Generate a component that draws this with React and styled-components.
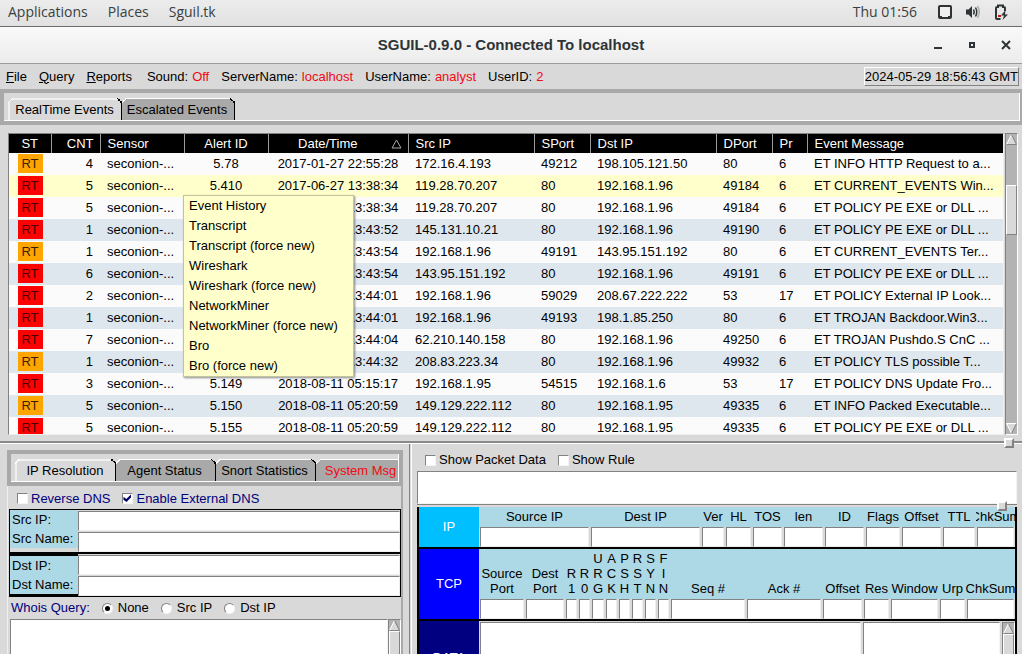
import React from "react";
import styled, { createGlobalStyle, css } from "styled-components";

const GREY = "#d9d9d9";
const BAND = "#a9a9a9";
const SHADE = "#828282";
const LIGHT = "#ffffff";
const NAVY = "#00007c";
const RED = "#f00a14";

const Global = createGlobalStyle`
  *, *::before, *::after { box-sizing: border-box; }
  html, body { margin: 0; height: 100%; overflow: hidden; }
  #root { height: 100%; }
  body {
    background: ${GREY};
    color: #000;
    font-family: "Liberation Sans", Arial, sans-serif;
    font-size: 13px;
    line-height: 16px;
  }
  button, input, textarea { font: inherit; color: inherit; margin: 0; border-radius: 0; }
  button { border: 0; padding: 0; background: none; white-space: nowrap; }
`;

const Screen = styled.div`
  display: flex;
  flex-direction: column;
  height: 100vh;
  overflow: hidden;
`;

/* desktop panel */

const DesktopBar = styled.header`
  flex: none;
  display: flex;
  align-items: center;
  justify-content: space-between;
  height: 27px;
  padding: 0 13px 2px 8px;
  border-bottom: 1px solid #6c6c6c;
  background: linear-gradient(#ececec, #e1e1e1);
  color: #3a3f41;
  font-family: "Open Sans", "Noto Sans", sans-serif;
  font-size: 14px;
`;

const DesktopGroup = styled.div`
  display: flex;
  align-items: center;
  gap: ${(p) => p.$gap}px;
`;

const DesktopButton = styled.button`
  line-height: 20px;
`;

const Tray = styled.svg`
  display: block;
  width: 16px;
  height: 16px;
`;

/* window title */

const TitleBar = styled.div`
  flex: none;
  display: grid;
  grid-template-columns: 1fr auto 1fr;
  align-items: center;
  height: 37px;
  padding: 0 10px;
  border-bottom: 1px solid #9b9b9b;
  background: linear-gradient(#f9f9f9, #ececec);
`;

const Title = styled.h1`
  grid-column: 2;
  margin: 0;
  font-size: 15px;
  line-height: 20px;
  font-weight: bold;
  color: #2e3436;
`;

const WindowButtons = styled.div`
  display: flex;
  justify-content: flex-end;
  gap: 22px;
`;

const WindowButton = styled.button`
  width: 12px;
  height: 12px;
  svg { display: block; }
`;

/* menu bar */

const MenuBar = styled.nav`
  flex: none;
  display: flex;
  align-items: center;
  height: 25px;
  padding: 0 3px 0 6px;
`;

const Menus = styled.div`
  display: flex;
  gap: 12px;
`;

const MenuButton = styled.button`
  &::first-letter { text-decoration: underline; }
`;

const Statuses = styled.div`
  display: flex;
  flex: 1;
  gap: 12px;
  margin-left: 15px;
`;

const Status = styled.span`
  display: flex;
  gap: 4px;
  white-space: nowrap;
`;

const StatusValue = styled.span`
  color: ${RED};
`;

const Clock = styled.div`
  padding: 0;
  border: 1px solid;
  border-color: ${LIGHT} ${SHADE} ${SHADE} ${LIGHT};
  line-height: 17px;
  white-space: nowrap;
`;

/* notebook tabs */

const TabBand = styled.div`
  flex: none;
  padding: 4px 2px 4px 4px;
  background: ${BAND};
`;

const TabStrip = styled.div`
  display: flex;
  align-items: flex-end;
  height: 28px;
  padding-left: 4px;
  border: solid ${LIGHT};
  border-width: 0 1px 1px 0;
  background: ${GREY};
  overflow: hidden;
`;

const Tab = styled.button`
  position: relative;
  flex: none;
  width: ${(p) => p.$width}px;
  height: 22px;
  padding-right: 2px;
  border: solid;
  border-width: 2px 1px 0 2px;
  border-color: #f0f0f0 #000 transparent #f0f0f0;
  background: ${(p) => (p.$active ? GREY : BAND)};
  color: ${(p) => (p.$alert ? RED : "#000")};

  &::before,
  &::after {
    content: "";
    position: absolute;
    top: -2px;
    width: 5px;
    height: 5px;
  }
  &::before {
    left: -2px;
    background: linear-gradient(to top left, transparent 45%, #fff 45% 60%, ${GREY} 60%);
  }
  &::after {
    right: -1px;
    background: linear-gradient(to top right, transparent 40%, #000 40% 60%, ${GREY} 60%);
  }

  ${(p) =>
    !p.$active &&
    css`
      border-width: 1px 1px 0 0;
      border-top-color: ${LIGHT};
      &::before { left: 0; top: -1px; }
      &::after { top: -1px; }
    `}
`;

/* scroll bars */

const Trough = styled.div`
  flex: none;
  display: flex;
  flex-direction: column;
  width: 13px;
  border: 1px solid;
  border-color: ${SHADE} ${LIGHT} ${LIGHT} ${SHADE};
  background: #b3b3b3;
`;

const Arrow = styled.svg`
  flex: none;
  display: block;
  width: 11px;
  height: 11px;
`;

const Lane = styled.div`
  flex: 1;
  display: flex;
  flex-direction: column;
  padding-top: ${(p) => p.$before}px;
`;

const Thumb = styled.div`
  height: ${(p) => (p.$size ? `${p.$size}px` : "100%")};
  border: 1px solid;
  border-color: ${LIGHT} ${SHADE} ${SHADE} ${LIGHT};
  background: ${GREY};
`;

function ScrollBar({ before = 0, size }) {
  return (
    <Trough aria-hidden="true">
      <Arrow viewBox="0 0 11 11">
        <path d="M5.5 0.5 L10.5 10.5 H0.5 Z" fill={GREY} />
        <path d="M5.5 0.5 L0.5 10.5" stroke="#fff" />
        <path d="M5.5 0.5 L10.5 10.5 H0.5" stroke={SHADE} fill="none" />
      </Arrow>
      <Lane $before={before}>
        <Thumb $size={size} />
      </Lane>
      <Arrow viewBox="0 0 11 11">
        <path d="M0.5 0.5 H10.5 L5.5 10.5 Z" fill={GREY} />
        <path d="M5.5 10.5 L0.5 0.5 H10.5" stroke="#fff" fill="none" />
        <path d="M10.5 0.5 L5.5 10.5" stroke={SHADE} />
      </Arrow>
    </Trough>
  );
}

/* events */

const EventsPane = styled.main`
  position: relative;
  flex: none;
  display: flex;
  gap: 1px;
  height: 316px;
  padding: 8px 4px 6px 8px;
`;

const EventsFrame = styled.div`
  flex: 1;
  min-width: 0;
  overflow: hidden;
  border: 1px solid;
  border-color: ${SHADE} #eee #eee ${SHADE};
`;

const Table = styled.table`
  width: 100%;
  table-layout: fixed;
  border-collapse: collapse;
`;

const HeadCell = styled.th`
  height: 19px;
  padding: 0 6px 0 ${(p) => (p.$align ? 6 : 7)}px;
  border-left: ${(p) => (p.$first ? 0 : 1)}px solid #999;
  background: #000;
  color: #fff;
  font-weight: normal;
  line-height: 19px;
  text-align: ${(p) => p.$align || "left"};
  white-space: nowrap;
`;

const SortHead = styled.div`
  display: flex;
  align-items: center;
  justify-content: flex-end;
  gap: 33px;
`;

const Row = styled.tr`
  background: ${(p) => p.$bg};
`;

const Cell = styled.td`
  height: 22px;
  padding: 0 0 0 7px;
  line-height: 22px;
  white-space: nowrap;
  overflow: hidden;
  text-align: ${(p) => p.$align || "left"};
  ${(p) => p.$align === "center" && "padding: 0;"}
  ${(p) => p.$align === "right" && "padding: 0 7px 0 0;"}
`;

const Badge = styled.span`
  display: block;
  width: 25px;
  margin: 0 auto 1px;
  background: ${(p) => (p.$high ? "#fd0202" : "#ffa500")};
  color: ${(p) => (p.$high ? "#4a0000" : "#3a1e00")};
  line-height: 19px;
`;

const ContextMenu = styled.div`
  position: absolute;
  left: 183px;
  top: 70px;
  display: flex;
  flex-direction: column;
  width: 171px;
  border: 1px solid #c4c49c;
  background: #ffffcc;
  box-shadow: 1px 1px 2px rgba(0, 0, 0, 0.45);
`;

const ContextItem = styled.button`
  padding-left: 5px;
  line-height: 20px;
  text-align: left;
`;

const Sash = styled.div`
  position: relative;
  flex: none;
  height: 3px;
  border-top: 2px solid #8a8a8a;
  border-bottom: 1px solid ${LIGHT};
`;

const Handle = styled.div`
  position: absolute;
  right: ${(p) => p.$right}px;
  top: ${(p) => p.$top}px;
  width: 10px;
  height: 10px;
  border: 2px solid;
  border-color: ${LIGHT} ${SHADE} ${SHADE} ${LIGHT};
  background: ${GREY};
`;

/* lower panes */

const Lower = styled.div`
  flex: 1;
  display: flex;
  min-height: 0;
`;

const LeftPane = styled.section`
  flex: none;
  display: flex;
  flex-direction: column;
  width: 396px;
  margin: 6px 6px 0 7px;
  border-right: 2px solid ${BAND};
`;

const PaneDivider = styled.div`
  flex: none;
  width: 3px;
  border-left: 1px solid ${SHADE};
  border-right: 1px solid ${LIGHT};
`;

const LeftBody = styled.div`
  flex: 1;
  display: flex;
  flex-direction: column;
  min-height: 0;
  padding-left: 1px;
  border-left: 1px solid #eee;
`;

const Options = styled.div`
  flex: none;
  display: flex;
  align-items: center;
  gap: 12px;
  height: ${(p) => p.$height}px;
  padding-top: ${(p) => p.$drop || 0}px;
  padding-left: ${(p) => p.$inset || 0}px;
  color: ${(p) => (p.$navy ? NAVY : "#000")};
`;

const Option = styled.label`
  display: flex;
  align-items: center;
  gap: ${(p) => p.$gap || 3}px;
  white-space: nowrap;
`;

const CheckBox = styled.input.attrs({ type: "checkbox" })`
  appearance: none;
  width: 11px;
  height: 11px;
  border: 1px solid;
  border-color: ${SHADE} #f4f4f4 #f4f4f4 ${SHADE};
  background: #fff;
  &:checked::after {
    content: "";
    display: block;
    width: 8px;
    height: 8px;
    background: #000060;
    clip-path: polygon(0 35%, 35% 62%, 100% 0, 100% 38%, 38% 100%, 0 72%);
  }
`;

const Radio = styled.input.attrs({ type: "radio" })`
  appearance: none;
  display: grid;
  place-items: center;
  width: 11px;
  height: 11px;
  border: 1px solid;
  border-color: ${SHADE} #f4f4f4 #f4f4f4 ${SHADE};
  border-radius: 50%;
  background: #fff;
  &:checked::after {
    content: "";
    width: 5px;
    height: 5px;
    border-radius: 50%;
    background: #000;
  }
`;

const Hosts = styled.div`
  flex: none;
  border: solid #000;
  border-width: 1px 1px 0;
`;

const Host = styled.div`
  display: grid;
  grid-template-columns: 68px 1fr;
  border-bottom: ${(p) => (p.$last ? 1 : 2)}px solid #000;
`;

const HostLabels = styled.div`
  display: flex;
  flex-direction: column;
  border: solid #000;
  border-width: ${(p) => (p.$last ? "2px 0" : "0")};
`;

const HostLabel = styled.label`
  padding-left: 2px;
  background: #add8e6;
  line-height: 19px;
`;

const HostFields = styled.div`
  display: flex;
  flex-direction: column;
  gap: 1px;
  padding-top: 1px;
`;

const Field = styled.input.attrs({ type: "text" })`
  display: block;
  width: 100%;
  min-width: 0;
  height: 20px;
  padding: 0 1px;
  border: 1px solid;
  border-color: ${SHADE} #eee #eee ${SHADE};
  background: #fff;
`;

const WhoisTitle = styled.span`
  color: ${NAVY};
`;

const TextRow = styled.div`
  flex: none;
  display: flex;
  height: 120px;
  padding-left: 1px;
`;

const TextBox = styled.textarea`
  display: block;
  flex: ${(p) => p.$flex || 1};
  width: 0;
  min-width: 0;
  height: auto;
  padding: 2px;
  border: 1px solid;
  border-color: ${SHADE} #f4f4f4 #f4f4f4 ${SHADE};
  background: #fff;
  resize: none;
  overflow: hidden;
`;

const RightPane = styled.section`
  flex: 1;
  display: flex;
  flex-direction: column;
  min-width: 0;
  padding: 0 5px;
`;

const RuleBox = styled.div`
  position: relative;
  flex: none;
  display: flex;
  height: 34px;
  margin-bottom: 2px;
  border-bottom: 1px solid ${SHADE};
`;

const Packet = styled.div`
  flex: 1;
  display: flex;
  flex-direction: column;
  gap: 2px;
  min-height: 0;
  padding: 0 2px;
  background: #000;
  overflow: hidden;
`;

const Layer = styled.div`
  flex: none;
  display: grid;
  grid-template-columns: 60px 1fr;
  height: ${(p) => p.$height}px;
`;

const LayerName = styled.div`
  display: grid;
  place-items: center;
  background: ${(p) => p.$bg};
  color: #fff;
`;

const HeaderFields = styled.div`
  display: grid;
  grid-template-columns: ${(p) => p.$columns};
  min-width: 0;
  background: #add8e6;
`;

const HeaderField = styled.label`
  display: flex;
  flex-direction: column;
  justify-content: flex-end;
  min-width: 0;
  overflow: hidden;
`;

const FieldCaption = styled.span`
  display: flex;
  justify-content: center;
  padding-bottom: 3px;
  line-height: 15px;
  text-align: center;
  white-space: pre;
`;

const FieldWell = styled.span`
  display: block;
  padding: 0 1px;
  background: ${GREY};
`;

const DataBoxes = styled.div`
  display: flex;
  gap: 2px;
  min-width: 0;
  padding: 1px 0 0 1px;
  background: ${GREY};
`;

const COLUMNS = [
  { name: "ST", width: 42, align: "center" },
  { name: "CNT", width: 49, align: "right" },
  { name: "Sensor", width: 84 },
  { name: "Alert ID", width: 84, align: "center" },
  { name: "Date/Time", width: 140, align: "center", sorted: true },
  { name: "Src IP", width: 126 },
  { name: "SPort", width: 56 },
  { name: "Dst IP", width: 126 },
  { name: "DPort", width: 56 },
  { name: "Pr", width: 35 },
  { name: "Event Message" },
];

const EVENTS = [
  [0, 4, "5.78", "2017-01-27 22:55:28", "172.16.4.193", 49212, "198.105.121.50", 80, 6, "ET INFO HTTP Request to a..."],
  [1, 5, "5.410", "2017-06-27 13:38:34", "119.28.70.207", 80, "192.168.1.96", 49184, 6, "ET CURRENT_EVENTS Win..."],
  [1, 5, "", "2017-06-27 13:38:34", "119.28.70.207", 80, "192.168.1.96", 49184, 6, "ET POLICY PE EXE or DLL ..."],
  [1, 1, "", "2017-06-27 13:43:52", "145.131.10.21", 80, "192.168.1.96", 49190, 6, "ET POLICY PE EXE or DLL ..."],
  [0, 1, "", "2017-06-27 13:43:54", "192.168.1.96", 49191, "143.95.151.192", 80, 6, "ET CURRENT_EVENTS Ter..."],
  [1, 6, "", "2017-06-27 13:43:54", "143.95.151.192", 80, "192.168.1.96", 49191, 6, "ET POLICY PE EXE or DLL ..."],
  [1, 2, "", "2017-06-27 13:44:01", "192.168.1.96", 59029, "208.67.222.222", 53, 17, "ET POLICY External IP Look..."],
  [1, 1, "", "2017-06-27 13:44:01", "192.168.1.96", 49193, "198.1.85.250", 80, 6, "ET TROJAN Backdoor.Win3..."],
  [1, 7, "", "2017-06-27 13:44:04", "62.210.140.158", 80, "192.168.1.96", 49250, 6, "ET TROJAN Pushdo.S CnC ..."],
  [0, 1, "", "2017-06-27 13:44:32", "208.83.223.34", 80, "192.168.1.96", 49932, 6, "ET POLICY TLS possible T..."],
  [1, 3, "5.149", "2018-08-11 05:15:17", "192.168.1.95", 54515, "192.168.1.6", 53, 17, "ET POLICY DNS Update Fro..."],
  [0, 5, "5.150", "2018-08-11 05:20:59", "149.129.222.112", 80, "192.168.1.95", 49335, 6, "ET INFO Packed Executable..."],
  [1, 5, "5.155", "2018-08-11 05:20:59", "149.129.222.112", 80, "192.168.1.95", 49335, 6, "ET POLICY PE EXE or DLL ..."],
];

const SELECTED = 1;

const MENU = [
  "Event History",
  "Transcript",
  "Transcript (force new)",
  "Wireshark",
  "Wireshark (force new)",
  "NetworkMiner",
  "NetworkMiner (force new)",
  "Bro",
  "Bro (force new)",
];

const STATUS = [
  ["Sound:", "Off"],
  ["ServerName:", "localhost"],
  ["UserName:", "analyst"],
  ["UserID:", "2"],
];

const IP_FIELDS = ["Source IP", "Dest IP", "Ver", "HL", "TOS", "len", "ID", "Flags", "Offset", "TTL", "ChkSum"];
const IP_COLUMNS = "1fr 1fr 24px 27px 31px 41px 41px 36px 41px 34px 39px";

const TCP_FIELDS = [
  "Source\nPort", "Dest\nPort", "R\n1", "R\n0", "U\nR\nG", "A\nC\nK", "P\nS\nH", "R\nS\nT", "S\nY\nN", "F\nI\nN",
  "Seq #", "Ack #", "Offset", "Res", "Window", "Urp", "ChkSum",
];
const TCP_COLUMNS = "46px 40px 13px 13px 14px repeat(5, 13px) 1fr 1fr 41px 27px 49px 27px 49px";

function rowColour(i) {
  if (i === SELECTED) return "#ffffcc";
  return i % 2 ? "#dfe7ee" : "#fbfbfb";
}

function EventTable() {
  return (
    <Table>
      <colgroup>
        {COLUMNS.map((c) => (
          <col key={c.name} width={c.width} />
        ))}
      </colgroup>
      <thead>
        <tr>
          {COLUMNS.map((c, i) => (
            <HeadCell key={c.name} $align={c.align} $first={i === 0} scope="col">
              {c.sorted ? (
                <SortHead>
                  {c.name}
                  <svg width="11" height="10" viewBox="0 0 11 10" aria-hidden="true">
                    <path d="M5.5 1 L10 9 H1 Z" fill="none" stroke="#aaa" />
                  </svg>
                </SortHead>
              ) : (
                c.name
              )}
            </HeadCell>
          ))}
        </tr>
      </thead>
      <tbody>
        {EVENTS.map(([high, count, id, time, src, sport, dst, dport, pr, message], i) => (
          <Row key={i} $bg={rowColour(i)}>
            <Cell $align="center">
              <Badge $high={high}>RT</Badge>
            </Cell>
            <Cell $align="right">{count}</Cell>
            <Cell>seconion-...</Cell>
            <Cell $align="center">{id}</Cell>
            <Cell $align="center">{time}</Cell>
            <Cell>{src}</Cell>
            <Cell>{sport}</Cell>
            <Cell>{dst}</Cell>
            <Cell>{dport}</Cell>
            <Cell>{pr}</Cell>
            <Cell>{message}</Cell>
          </Row>
        ))}
      </tbody>
    </Table>
  );
}

function HostBlock({ prefix, last }) {
  const ip = `${prefix}-ip`;
  const name = `${prefix}-name`;
  return (
    <Host $last={last}>
      <HostLabels $last={last}>
        <HostLabel htmlFor={ip}>{prefix} IP:</HostLabel>
        <HostLabel htmlFor={name}>{prefix} Name:</HostLabel>
      </HostLabels>
      <HostFields>
        <Field id={ip} />
        <Field id={name} />
      </HostFields>
    </Host>
  );
}

function HeaderLayer({ name, colour, height, fields, columns }) {
  return (
    <Layer $height={height}>
      <LayerName $bg={colour}>{name}</LayerName>
      <HeaderFields $columns={columns}>
        {fields.map((f) => (
          <HeaderField key={f}>
            <FieldCaption>{f}</FieldCaption>
            <FieldWell>
              <Field />
            </FieldWell>
          </HeaderField>
        ))}
      </HeaderFields>
    </Layer>
  );
}

export default function App() {
  return (
    <Screen>
      <Global />
      <DesktopBar>
        <DesktopGroup $gap={20}>
          <DesktopButton>Applications</DesktopButton>
          <DesktopButton>Places</DesktopButton>
          <DesktopButton>Sguil.tk</DesktopButton>
        </DesktopGroup>
        <DesktopGroup $gap={20}>
          <DesktopButton>Thu 01:56</DesktopButton>
          <DesktopGroup $gap={12}>
            <Tray viewBox="0 0 16 16" aria-hidden="true">
              <path d="M3 3 H13 V12 H11 V13 H5 V12 H3 Z" fill="#efefef" />
              <path d="M3 1 H13 Q15 1 15 3 V13 Q15 15 13 15 H3 Q1 15 1 13 V3 Q1 1 3 1 Z M3 3 V12 H5 V13 H11 V12 H13 V3 Z" fill="#2e3436" fillRule="evenodd" />
            </Tray>
            <Tray viewBox="0 0 16 16" aria-hidden="true">
              <path d="M1 5.5 H3.5 L7 2 V14 L3.5 10.5 H1 Z" fill="#2e3436" />
              <path d="M8.5 5.5 Q10 8 8.5 10.5 M10.5 3.5 Q13 8 10.5 12.5" fill="none" stroke="#2e3436" strokeWidth="1.5" />
              <path d="M12.5 2 Q16 8 12.5 14" fill="none" stroke="#aeb0b0" strokeWidth="1.5" />
            </Tray>
            <Tray viewBox="0 0 16 16" aria-hidden="true">
              <path d="M7.5 15 H4 Q3 15 3 14 V4 Q3 3 4 3 H5 V1.5 H10 V3 H11 Q12 3 12 4 V7" fill="none" stroke="#2e3436" strokeWidth="2" />
              <path d="M5 11 H8 V13 H5 Z" fill="#c01c1c" />
              <path d="M12.5 6 L8 11.5 H11 L9.5 16 L15 10.5 H12 Z" fill="#2e3436" />
            </Tray>
          </DesktopGroup>
        </DesktopGroup>
      </DesktopBar>

      <TitleBar>
        <Title>SGUIL-0.9.0 - Connected To localhost</Title>
        <WindowButtons>
          <WindowButton aria-label="Minimize">
            <svg width="12" height="12"><path d="M2 8 H10 V10 H2 Z" fill="#2e3436" /></svg>
          </WindowButton>
          <WindowButton aria-label="Maximize">
            <svg width="12" height="12"><path d="M4 4 H8 V8 H4 Z" fill="none" stroke="#2e3436" strokeWidth="2" /></svg>
          </WindowButton>
          <WindowButton aria-label="Close">
            <svg width="12" height="12"><path d="M2 2 L10 10 M10 2 L2 10" stroke="#2e3436" strokeWidth="2" /></svg>
          </WindowButton>
        </WindowButtons>
      </TitleBar>

      <MenuBar>
        <Menus>
          <MenuButton>File</MenuButton>
          <MenuButton>Query</MenuButton>
          <MenuButton>Reports</MenuButton>
        </Menus>
        <Statuses>
          {STATUS.map(([label, value]) => (
            <Status key={label}>
              {label}
              <StatusValue>{value}</StatusValue>
            </Status>
          ))}
        </Statuses>
        <Clock>2024-05-29 18:56:43 GMT</Clock>
      </MenuBar>

      <TabBand>
        <TabStrip role="tablist">
          <Tab role="tab" $width={114} $active>RealTime Events</Tab>
          <Tab role="tab" $width={113}>Escalated Events</Tab>
        </TabStrip>
      </TabBand>

      <EventsPane>
        <EventsFrame>
          <EventTable />
        </EventsFrame>
        <ScrollBar before={40} size={50} />
        <ContextMenu role="menu">
          {MENU.map((item) => (
            <ContextItem key={item} role="menuitem">{item}</ContextItem>
          ))}
        </ContextMenu>
      </EventsPane>

      <Sash>
        <Handle $right={8} $top={-5} />
      </Sash>

      <Lower>
        <LeftPane>
          <TabBand>
            <TabStrip role="tablist">
              <Tab role="tab" $width={101} $active>IP Resolution</Tab>
              <Tab role="tab" $width={100}>Agent Status</Tab>
              <Tab role="tab" $width={100}>Snort Statistics</Tab>
              <Tab role="tab" $width={92} $alert>System Msg</Tab>
            </TabStrip>
          </TabBand>
          <LeftBody>
            <Options $height={23} $inset={8} $drop={2} $navy>
              <Option>
                <CheckBox />
                Reverse DNS
              </Option>
              <Option>
                <CheckBox defaultChecked />
                Enable External DNS
              </Option>
            </Options>
            <Hosts>
              <HostBlock prefix="Src" />
              <HostBlock prefix="Dst" last />
            </Hosts>
            <Options $height={22} $inset={2}>
              <WhoisTitle>Whois Query:</WhoisTitle>
              <Option $gap={5}>
                <Radio name="whois" defaultChecked />
                None
              </Option>
              <Option $gap={5}>
                <Radio name="whois" />
                Src IP
              </Option>
              <Option $gap={5}>
                <Radio name="whois" />
                Dst IP
              </Option>
            </Options>
            <TextRow>
              <TextBox aria-label="Whois result" />
              <ScrollBar />
            </TextRow>
          </LeftBody>
        </LeftPane>

        <PaneDivider />

        <RightPane>
          <Options $height={27} $inset={8} $drop={5}>
            <Option>
              <CheckBox />
              Show Packet Data
            </Option>
            <Option>
              <CheckBox />
              Show Rule
            </Option>
          </Options>
          <RuleBox>
            <TextBox aria-label="Rule" />
            <Handle $right={10} $top={30} />
          </RuleBox>
          <Packet>
            <HeaderLayer name="IP" colour="#00bfff" height={40} fields={IP_FIELDS} columns={IP_COLUMNS} />
            <HeaderLayer name="TCP" colour="#0000ff" height={70} fields={TCP_FIELDS} columns={TCP_COLUMNS} />
            <Layer $height={74}>
              <LayerName $bg="#000080">DATA</LayerName>
              <DataBoxes>
                <TextBox aria-label="Packet bytes" $flex={391} />
                <TextBox aria-label="Packet text" $flex={137} />
                <ScrollBar />
              </DataBoxes>
            </Layer>
          </Packet>
        </RightPane>
      </Lower>
    </Screen>
  );
}
